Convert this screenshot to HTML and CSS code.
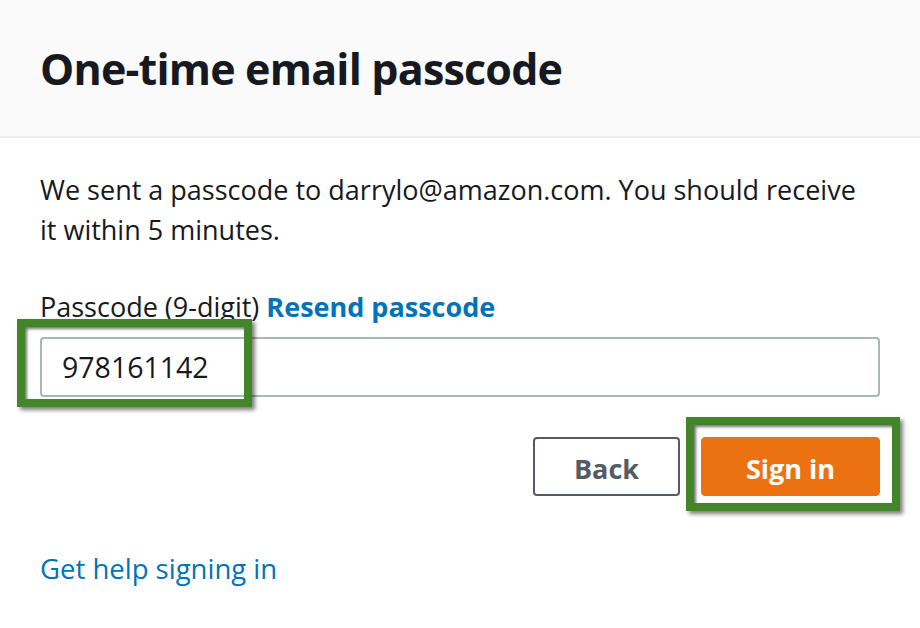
FILE: index.html
```html
<!DOCTYPE html>
<html lang="en">
<head>
<meta charset="utf-8">
<title>One-time email passcode</title>
<link rel="stylesheet" href="styles.css">
</head>
<body>
<div class="panel">
  <header class="header">
    <h1 class="title">One-time email passcode</h1>
  </header>
  <main class="content">
    <p class="message">We sent a passcode to darrylo@amazon.com. You should receive it within 5 minutes.</p>
    <div class="field">
      <label class="label" for="code">Passcode (9-digit) <a class="resend" href="#">Resend passcode</a></label>
      <div class="input-wrap">
        <input class="input" id="code" type="text" value="978161142">
        <span class="highlight highlight-input"></span>
      </div>
    </div>
    <div class="actions">
      <button class="btn btn-back" type="button">Back</button>
      <span class="signin-wrap">
        <button class="btn btn-primary" type="button">Sign in</button>
        <span class="highlight highlight-signin"></span>
      </span>
    </div>
    <a class="help" href="#">Get help signing in</a>
  </main>
</div>
</body>
</html>
```
FILE: styles.css
```css
* { box-sizing: border-box; }
html, body { margin: 0; padding: 0; background: #ffffff; }
body {
  font-family: "Open Sans", "Noto Sans", Arial, sans-serif;
  color: #16191f;
  width: 920px;
  height: 628px;
  overflow: hidden;
}
.header {
  height: 138px;
  background: #fafafa;
  border-bottom: 2px solid #eaeded;
  padding: 0 40px;
  display: flex;
  align-items: center;
}
.title {
  margin: 0;
  font-size: 43px;
  font-weight: 700;
  letter-spacing: -0.8px;
  color: #16191f;
}
.content {
  padding: 32px 40px 0 40px;
}
.message {
  margin: 0;
  max-width: 830px;
  font-size: 27px;
  line-height: 40px;
}
.field {
  margin-top: 41px;
}
.label {
  display: block;
  font-size: 27px;
  line-height: 32px;
  margin-bottom: 14px;
}
.resend {
  color: #0073bb;
  font-weight: 700;
  text-decoration: none;
}
.input-wrap {
  position: relative;
}
.input {
  display: block;
  width: 840px;
  height: 60px;
  border: 2px solid #aab7b8;
  border-radius: 4px;
  padding: 0 20px;
  font-family: inherit;
  font-size: 28.5px;
  color: #16191f;
  background: #ffffff;
  outline: none;
}
.highlight {
  position: absolute;
  border: 8px solid #438629;
  box-shadow: inset 2px 2px 3px rgba(0,0,0,0.55), 3px 3px 4px rgba(0,0,0,0.5);
  pointer-events: none;
}
.highlight-input {
  left: -23px;
  top: -18px;
  width: 235px;
  height: 88px;
}
.actions {
  margin-top: 40px;
  display: flex;
  justify-content: flex-end;
  gap: 21px;
}
.btn {
  height: 59px;
  padding: 4px 0 0 0;
  border-radius: 4px;
  font-family: inherit;
  font-size: 27px;
  font-weight: 700;
  cursor: pointer;
}
.btn-back {
  width: 147px;
  background: #ffffff;
  border: 2px solid #545b64;
  color: #545b64;
}
.signin-wrap {
  position: relative;
  display: block;
}
.btn-primary {
  display: block;
  width: 179px;
  background: #ec7211;
  border: 1px solid #ec7211;
  color: #ffffff;
}
.highlight-signin {
  left: -15px;
  top: -20px;
  width: 214px;
  height: 94px;
}
.help {
  display: inline-block;
  margin-top: 54px;
  font-size: 27.5px;
  color: #0073bb;
  text-decoration: none;
}
```
